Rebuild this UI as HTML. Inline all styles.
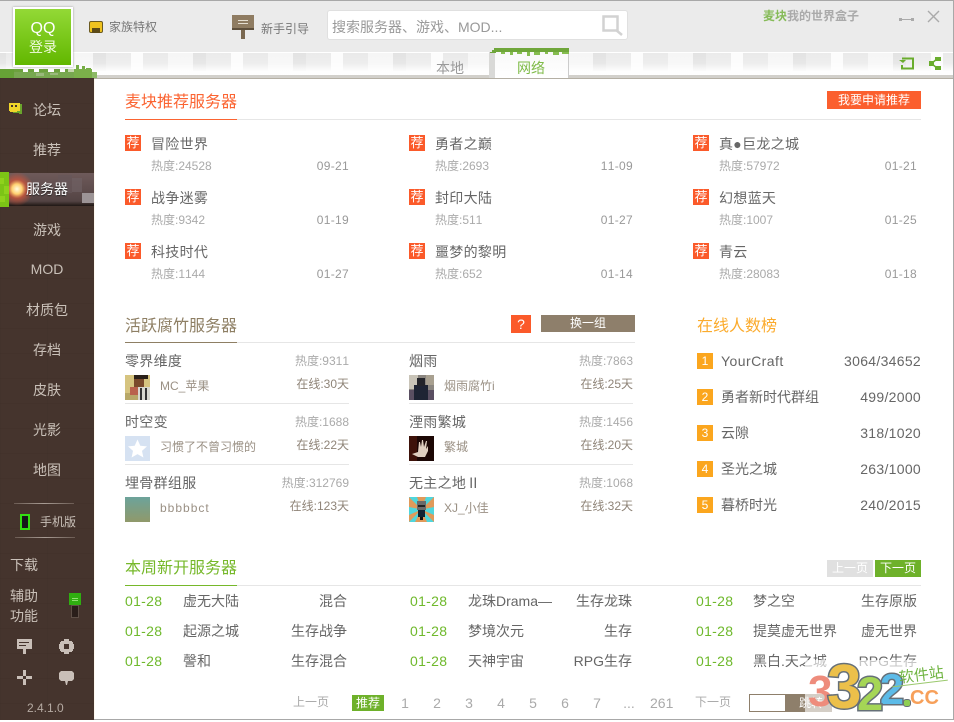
<!DOCTYPE html>
<html lang="zh"><head><meta charset="utf-8"><title>麦块我的世界盒子</title>
<style>
html,body{margin:0;padding:0}
body{width:954px;height:720px;position:relative;overflow:hidden;background:#fff;font-family:"Liberation Sans","Noto Sans CJK SC",sans-serif;font-size:12px;color:#666}
.a{position:absolute;display:block}
.t{position:absolute;line-height:20px;white-space:nowrap}
.n{font-size:14px;color:#666;letter-spacing:.3px}
.s{font-size:12px;color:#aaa;font-kerning:none}
.d{font-size:12px;color:#999;letter-spacing:.3px;font-kerning:none}
.o{font-size:12px;color:#8f8478;font-kerning:none}
.u{font-size:12px;color:#9a9084}
.h{font-size:16px}
.j{position:absolute;width:16px;height:16px;background:#fb5a2a;color:#fff;font-size:13px;line-height:16px;text-align:center}
.r{position:absolute;width:16px;height:16px;left:697px;background:#fba61e;color:#fff;font-size:12px;line-height:16px;text-align:center}
.m{font-size:14px;color:#c9c0b8;text-align:center;width:94px;left:0}
.g{font-size:14px;color:#6fb92c;letter-spacing:.3px;font-kerning:none}
.w{font-size:14px;color:#666}
.p{font-size:14px;color:#aaa;text-align:center;width:20px}
.b{-webkit-text-stroke:3px #667078;paint-order:stroke fill;font-weight:bold}
</style></head><body>

<!-- header -->
<div class="a" style="left:0;top:0;width:954px;height:52px;background:#ebebeb"></div>
<div class="a" style="left:0;top:0;width:954px;height:1px;background:#a8a8a8"></div>
<svg class="a" style="left:0;top:52px" width="954" height="26" viewBox="0 0 954 26">
<defs>
<pattern id="bk" x="0" y="1" width="100" height="22" patternUnits="userSpaceOnUse">
<rect width="100" height="22" fill="#f8f8f8"/>
<rect x="6" width="25" height="18" fill="#ebebeb"/>
<rect x="31" width="12" height="18" fill="#fcfcfc"/>
<rect x="43" width="25" height="18" fill="#eaeaea"/>
<rect x="68" width="25" height="18" fill="#f6f6f6"/>
<rect x="93" width="13" height="18" fill="#e3e3e3"/>
<rect x="0" width="6" height="18" fill="#e3e3e3"/>
</pattern>
<linearGradient id="f" x1="0" y1="0" x2="0" y2="1"><stop offset="0" stop-color="#fff" stop-opacity="0"/><stop offset=".45" stop-color="#fff" stop-opacity=".15"/><stop offset=".8" stop-color="#fff" stop-opacity=".85"/><stop offset="1" stop-color="#fff" stop-opacity=".95"/></linearGradient>
</defs>
<rect width="954" height="26" fill="#fbfbfb"/>
<rect y="1" width="954" height="22" fill="url(#bk)"/>
<rect y="1" width="954" height="22" fill="url(#f)"/>
<rect y="0" width="954" height="1" fill="#fff"/>
<rect y="23" width="954" height="3" fill="#d2d0cb"/>
</svg>
<div class="a" style="left:0;top:78px;width:954px;height:1px;background:#b4afa4"></div>

<!-- sidebar -->
<div class="a" style="left:0;top:78px;width:94px;height:642px;background-color:#45342d;background-image:linear-gradient(rgba(0,0,0,.035) 1px,transparent 1px),linear-gradient(90deg,rgba(0,0,0,.025) 1px,transparent 1px);background-size:47px 25px"></div>

<!-- grass -->
<svg class="a" style="left:0;top:64px" width="98" height="14" viewBox="0 0 98 14">
<rect x="0" y="5" width="14" height="9" fill="#66a236"/>
<rect x="14" y="8" width="60" height="6" fill="#78a850"/>
<g fill="#6da23e"><rect x="14" y="5" width="9" height="3"/><rect x="28" y="5" width="6" height="3"/><rect x="39" y="5" width="9" height="3"/><rect x="54" y="5" width="6" height="3"/><rect x="65" y="5" width="3" height="3"/></g>
<g fill="#9ab97c"><rect x="36" y="9" width="8" height="3"/><rect x="50" y="9" width="8" height="2"/></g>
<rect x="74" y="5" width="18" height="9" fill="#7bb04a"/>
<rect x="92" y="8" width="5" height="6" fill="#8cb965"/>
<g fill="#76ad45"><rect x="76" y="1" width="3" height="4"/><rect x="82" y="2" width="3" height="3"/><rect x="86" y="4" width="5" height="1"/></g>
<rect x="68" y="5" width="6" height="3" fill="#c7d8b0"/>
</svg>

<!-- QQ button -->
<div class="a" style="left:13px;top:7px;width:56px;height:56px;border:2px solid #fff;background:linear-gradient(#93d936,#62b700);box-shadow:0 0 2px #999"></div>
<div class="t" style="left:13px;width:60px;top:19px;text-align:center;font-size:16px;color:#fff">QQ</div>
<div class="t" style="left:13px;width:60px;top:37px;text-align:center;font-size:14px;color:#f1fbdf">登录</div>

<div class="a" style="left:89px;top:21px;width:14px;height:12px;background:#f0c31f;border:1px solid #6b5a20;box-sizing:border-box;border-radius:2px"></div>
<div class="a" style="left:92px;top:28px;width:8px;height:5px;background:#5c4a18"></div>
<div class="t" style="left:109px;top:17px;color:#777">家族特权</div>

<svg class="a" style="left:232px;top:15px" width="23" height="25" viewBox="0 0 23 25"><rect width="22" height="13" fill="#8f7c62"/><rect y="13" width="22" height="2" fill="#5e4f3c"/><rect x="9" y="15" width="4" height="9" fill="#7a6850"/><rect x="6" y="5" width="10" height="1" fill="#e6dfd2"/><rect x="6" y="8" width="10" height="1" fill="#e6dfd2"/></svg>
<div class="t" style="left:261px;top:19px;color:#777">新手引导</div>

<!-- search -->
<div class="a" style="left:327px;top:10px;width:301px;height:30px;background:#fff;border:1px solid #e0e0e0;box-sizing:border-box;border-radius:3px"></div>
<div class="t" style="left:332px;top:17px;font-size:14px;color:#999">搜索服务器、游戏、MOD...</div>
<svg class="a" style="left:601px;top:14px" width="24" height="24" viewBox="0 0 24 24"><rect x="2.500" y="2.500" width="14" height="14" fill="none" stroke="#d2d2d2" stroke-width="2.500"/><path d="M15 16l6 5" stroke="#d2d2d2" stroke-width="2.500" fill="none"/></svg>

<!-- title + window -->
<div class="t" style="left:763px;top:6px;color:#aaa;font-size:12px;font-weight:bold"><span style="color:#86bb58">麦块</span>我的世界盒子</div>
<svg class="a" style="left:895px;top:7px" width="50" height="20" viewBox="0 0 50 20"><rect x="4" y="12" width="15" height="1" fill="#aaa"/><rect x="4" y="11" width="3" height="3" fill="#aaa"/><rect x="16" y="11" width="3" height="3" fill="#aaa"/><path d="M33 4L44 15M44 4L33 15" stroke="#aaa" stroke-width="1.400"/></svg>

<!-- tabs -->
<div class="t" style="left:436px;top:58px;font-size:14px;color:#999">本地</div>
<div class="a" style="left:489px;top:52px;width:6px;height:26px;background:#d9d9d7"></div>
<div class="a" style="left:495px;top:50px;width:73px;height:28px;background:linear-gradient(#f8f8f8,#fff);box-shadow:1px 0 0 #ccc"></div>
<svg class="a" style="left:490px;top:48px" width="79" height="8" viewBox="0 0 79 8"><rect x="4" width="75" height="4" fill="#6fa63a"/><path d="M0 4h2v1H0zM2 2h4v3H2z" fill="#6fa63a"/><g fill="#86bd50"><rect x="11" y="4" width="4" height="2"/><rect x="20" y="4" width="3" height="3"/><rect x="27" y="4" width="5" height="2"/><rect x="37" y="4" width="3" height="4"/><rect x="44" y="4" width="6" height="3"/><rect x="55" y="4" width="3" height="2"/><rect x="63" y="4" width="6" height="3"/><rect x="72" y="4" width="7" height="2"/></g></svg>
<div class="t" style="left:517px;top:58px;font-size:14px;color:#7fbb48">网络</div>
<svg class="a" style="left:899px;top:56px" width="44" height="15" viewBox="0 0 44 15"><path d="M3 2.500H14V12.500H3V9" fill="none" stroke="#6aad2e" stroke-width="2"/><path d="M0 4h7l-3 3z" fill="#6aad2e"/><g fill="#6aad2e"><rect x="36" y="1" width="6" height="4"/><rect x="36" y="10" width="6" height="4"/><rect x="30" y="5" width="5" height="5"/></g><path d="M33 7L38 3M33 8L38 12" stroke="#6aad2e" stroke-width="1.500"/></svg>

<!-- sidebar items -->
<svg class="a" style="left:9px;top:102px" width="14" height="14" viewBox="0 0 14 14"><path d="M4 2h9v10h-3v-1H4z" fill="#6aa52c"/><rect y="1" width="11" height="8" fill="#f0d52a"/><rect x="2" y="3" width="2" height="2" fill="#45342d"/><rect x="6" y="3" width="2" height="2" fill="#45342d"/><rect x="1" y="9" width="7" height="1" fill="#f0d52a"/></svg>
<div class="t m" style="top:100px">论坛</div>
<div class="t m" style="top:140px">推荐</div>

<svg class="a" style="left:0;top:172px" width="94" height="35" viewBox="0 0 94 35"><defs><radialGradient id="gl" cx=".5" cy=".5" r=".5"><stop offset="0" stop-color="#fffbe0"/><stop offset=".3" stop-color="#ffd070"/><stop offset=".55" stop-color="#d8563a" stop-opacity=".7"/><stop offset="1" stop-color="#d8563a" stop-opacity="0"/></radialGradient><linearGradient id="bd" x1="0" y1="0" x2="0" y2="1"><stop offset="0" stop-color="#6e5a5a"/><stop offset=".85" stop-color="#544444"/><stop offset="1" stop-color="#1f1714"/></linearGradient></defs><rect x="8" y="1" width="86" height="33" fill="url(#bd)"/><rect x="58" y="3" width="14" height="18" fill="#66575a" opacity=".7"/><rect x="72" y="6" width="10" height="14" fill="#6f6164" opacity=".7"/><rect x="82" y="21" width="12" height="10" fill="#9c9496"/><circle cx="17" cy="17" r="17" fill="url(#gl)"/><rect x="0" y="0" width="9" height="35" fill="#7cc416"/><rect x="0" y="6" width="4" height="6" fill="#8fd21c"/><rect x="4" y="14" width="5" height="8" fill="#8fd21c"/><rect x="0" y="24" width="5" height="6" fill="#8fd21c"/></svg>
<div class="t" style="left:26px;top:179px;font-size:14px;color:#fff;text-shadow:0 1px 1px #222">服务器</div>

<div class="t m" style="top:220px">游戏</div>
<div class="t m" style="top:259px">MOD</div>
<div class="t m" style="top:300px">材质包</div>
<div class="t m" style="top:340px">存档</div>
<div class="t m" style="top:380px">皮肤</div>
<div class="t m" style="top:420px">光影</div>
<div class="t m" style="top:460px">地图</div>

<div class="a" style="left:14px;top:503px;width:60px;height:1px;background:linear-gradient(90deg,#6b5b53,#a89c94,#6b5b53)"></div>
<svg class="a" style="left:20px;top:514px" width="10" height="16" viewBox="0 0 10 16"><rect x="1" y="1" width="8" height="14" fill="#16181a" stroke="#33dd11" stroke-width="2"/></svg>
<div class="t" style="left:40px;top:512px;color:#c9c0b8">手机版</div>
<div class="a" style="left:15px;top:537px;width:60px;height:1px;background:linear-gradient(90deg,#6b5b53,#a89c94,#6b5b53)"></div>

<div class="t" style="left:10px;top:555px;font-size:14px;color:#c9c0b8">下载</div>
<div class="t" style="left:10px;top:586px;font-size:14px;color:#c9c0b8">辅助</div>
<div class="t" style="left:10px;top:606px;font-size:14px;color:#c9c0b8">功能</div>
<div class="a" style="left:71px;top:605px;width:8px;height:13px;background:#2a1e1a;border:1px solid #5e4f47;box-sizing:border-box"></div>
<div class="a" style="left:69px;top:593px;width:12px;height:12px;background:#2fae10"></div>
<div class="a" style="left:72px;top:598px;width:6px;height:1px;background:#8fe070;box-shadow:0 2px 0 #8fe070"></div>

<svg class="a" style="left:16px;top:637px" width="62" height="50" viewBox="0 0 62 50" fill="#c9bfb8"><rect x="1" y="2" width="15" height="10"/><rect x="7" y="12" width="3" height="5"/><rect x="3" y="5" width="10" height="1" fill="#45342d"/><rect x="3" y="8" width="7" height="1" fill="#45342d"/>
<path fill-rule="evenodd" d="M48 2h5v2h2v-0h1v1h1v2h1v5h-1v2h-1v1h-1v0h-2v2h-5v-2h-2v0h-1v-1h-1v-2h-1V7h1V5h1V4h1v0h2zM48 7v5h5V7z"/>
<rect x="7" y="33" width="3" height="6"/><rect x="7" y="42" width="3" height="6"/><rect x="1" y="39" width="6" height="3"/><rect x="10" y="39" width="6" height="3"/>
<path d="M45 34h11l2 2v6l-2 2h-4l-1 4h-1l-1-4h-4l-2-2v-6z"/></svg>
<div class="t" style="left:27px;top:698px;font-size:12px;color:#b5aaa2">2.4.1.0</div>

<!-- main divider -->
<div class="a" style="left:94px;top:79px;width:1px;height:640px;background:#fdf8ef"></div>
<div class="a" style="left:953px;top:0;width:1px;height:720px;background:#a8a8a8"></div>
<div class="a" style="left:94px;top:719px;width:860px;height:1px;background:#a8a8a8"></div>

<!-- recommended -->
<div class="t h" style="left:125px;top:93px;color:#fb6432">麦块推荐服务器</div>
<div class="a" style="left:125px;top:119px;width:796px;height:1px;background:#e6e6e6"></div>
<div class="a" style="left:125px;top:119px;width:112px;height:1px;background:#fb6432"></div>
<div class="t" style="left:827px;top:91px;width:94px;height:18px;line-height:18px;background:#fb5f2e;color:#fff;text-align:center">我要申请推荐</div>

<div class="j" style="left:125px;top:135px">荐</div><div class="t n" style="left:151px;top:134px">冒险世界</div><div class="t s" style="left:151px;top:156px">热度:24528</div><div class="t d" style="right:605px;top:156px">09-21</div>
<div class="j" style="left:409px;top:135px">荐</div><div class="t n" style="left:435px;top:134px">勇者之巅</div><div class="t s" style="left:435px;top:156px">热度:2693</div><div class="t d" style="right:321px;top:156px">11-09</div>
<div class="j" style="left:693px;top:135px">荐</div><div class="t n" style="left:719px;top:134px">真●巨龙之城</div><div class="t s" style="left:719px;top:156px">热度:57972</div><div class="t d" style="right:37px;top:156px">01-21</div>
<div class="j" style="left:125px;top:189px">荐</div><div class="t n" style="left:151px;top:188px">战争迷雾</div><div class="t s" style="left:151px;top:210px">热度:9342</div><div class="t d" style="right:605px;top:210px">01-19</div>
<div class="j" style="left:409px;top:189px">荐</div><div class="t n" style="left:435px;top:188px">封印大陆</div><div class="t s" style="left:435px;top:210px">热度:511</div><div class="t d" style="right:321px;top:210px">01-27</div>
<div class="j" style="left:693px;top:189px">荐</div><div class="t n" style="left:719px;top:188px">幻想蓝天</div><div class="t s" style="left:719px;top:210px">热度:1007</div><div class="t d" style="right:37px;top:210px">01-25</div>
<div class="j" style="left:125px;top:243px">荐</div><div class="t n" style="left:151px;top:242px">科技时代</div><div class="t s" style="left:151px;top:264px">热度:1144</div><div class="t d" style="right:605px;top:264px">01-27</div>
<div class="j" style="left:409px;top:243px">荐</div><div class="t n" style="left:435px;top:242px">噩梦的黎明</div><div class="t s" style="left:435px;top:264px">热度:652</div><div class="t d" style="right:321px;top:264px">01-14</div>
<div class="j" style="left:693px;top:243px">荐</div><div class="t n" style="left:719px;top:242px">青云</div><div class="t s" style="left:719px;top:264px">热度:28083</div><div class="t d" style="right:37px;top:264px">01-18</div>

<!-- active -->
<div class="t h" style="left:125px;top:317px;color:#8e7f64">活跃腐竹服务器</div>
<div class="a" style="left:125px;top:342px;width:510px;height:1px;background:#e6e6e6"></div>
<div class="a" style="left:125px;top:342px;width:112px;height:1px;background:#8e7f64"></div>
<div class="a" style="left:511px;top:315px;width:20px;height:18px;background:#fb5a2a;color:#fff;font-size:14px;line-height:18px;text-align:center">?</div>
<div class="a" style="left:541px;top:315px;width:94px;height:17px;background:#8e7f6b;color:#fff;font-size:12px;line-height:17px;text-align:center">换一组</div>

<div class="t n" style="left:125px;top:351px">零界维度</div><div class="t s" style="right:605px;top:351px">热度:9311</div><div class="t u" style="left:160px;top:376px">MC_苹果</div><div class="t o" style="right:605px;top:374px">在线:30天</div>
<div class="a" style="left:125px;top:403px;width:224px;height:1px;background:#e6e6e6"></div>
<div class="t n" style="left:125px;top:412px">时空变</div><div class="t s" style="right:605px;top:412px">热度:1688</div><div class="t u" style="left:160px;top:437px">习惯了不曾习惯的</div><div class="t o" style="right:605px;top:435px">在线:22天</div>
<div class="a" style="left:125px;top:464px;width:224px;height:1px;background:#e6e6e6"></div>
<div class="t n" style="left:125px;top:473px">埋骨群组服</div><div class="t s" style="right:605px;top:473px">热度:312769</div><div class="t u" style="left:160px;top:498px;letter-spacing:1px">bbbbbct</div><div class="t o" style="right:605px;top:496px">在线:123天</div>

<div class="t n" style="left:409px;top:351px">烟雨</div><div class="t s" style="right:321px;top:351px">热度:7863</div><div class="t u" style="left:444px;top:376px">烟雨腐竹i</div><div class="t o" style="right:321px;top:374px">在线:25天</div>
<div class="a" style="left:409px;top:403px;width:224px;height:1px;background:#e6e6e6"></div>
<div class="t n" style="left:409px;top:412px">湮雨繁城</div><div class="t s" style="right:321px;top:412px">热度:1456</div><div class="t u" style="left:444px;top:437px">繁城</div><div class="t o" style="right:321px;top:435px">在线:20天</div>
<div class="a" style="left:409px;top:464px;width:224px;height:1px;background:#e6e6e6"></div>
<div class="t n" style="left:409px;top:473px">无主之地Ⅱ</div><div class="t s" style="right:321px;top:473px">热度:1068</div><div class="t u" style="left:444px;top:498px">XJ_小佳</div><div class="t o" style="right:321px;top:496px">在线:32天</div>

<!-- avatars -->
<svg class="a" style="left:125px;top:375px" width="25" height="25" viewBox="0 0 25 25"><rect width="25" height="25" fill="#d6c480"/><rect y="18" width="25" height="7" fill="#b8a868"/><rect x="9" y="0" width="14" height="4" fill="#2a2019"/><rect x="9" y="4" width="10" height="8" fill="#7a4a2c"/><rect x="13" y="12" width="12" height="13" fill="#d8d8d0"/><rect x="15" y="13" width="2" height="12" fill="#333"/><rect x="20" y="13" width="2" height="12" fill="#333"/><rect x="5" y="12" width="8" height="8" fill="#b9624c"/></svg>
<svg class="a" style="left:125px;top:436px" width="25" height="25" viewBox="0 0 25 25"><rect width="25" height="25" fill="#d6e2f2"/><path d="M12.500 3.500l2.800 6.200 6.700.7-5 4.500 1.400 6.600-5.900-3.400-5.900 3.400 1.400-6.600-5-4.500 6.700-.7z" fill="#fff"/></svg>
<svg class="a" style="left:125px;top:497px" width="25" height="25" viewBox="0 0 25 25"><defs><linearGradient id="b3" x1="0" y1="0" x2="0" y2="1"><stop offset="0" stop-color="#6ca39b"/><stop offset="1" stop-color="#90996a"/></linearGradient></defs><rect width="25" height="25" fill="url(#b3)"/></svg>
<svg class="a" style="left:409px;top:375px" width="25" height="25" viewBox="0 0 25 25"><rect width="25" height="25" fill="#8b8680"/><rect x="0" y="0" width="9" height="14" fill="#c9c4b8"/><rect x="17" y="0" width="8" height="10" fill="#a8a090"/><rect y="15" width="25" height="10" fill="#5a4f62"/><rect x="5" y="10" width="14" height="15" fill="#1e2434"/><rect x="8" y="3" width="8" height="8" fill="#23242a"/></svg>
<svg class="a" style="left:409px;top:436px" width="25" height="25" viewBox="0 0 25 25"><rect width="25" height="25" fill="#1c0705"/><rect x="0" y="0" width="8" height="25" fill="#3e120a"/><path d="M9 21l-6-3 6-2 1-10h1l1 5 1-7h1l1 7 2-6h1l-1 8 2-3v5l-3 6z" fill="#e0cfc0"/></svg>
<svg class="a" style="left:409px;top:497px" width="25" height="25" viewBox="0 0 25 25"><rect width="25" height="25" fill="#e09a5a"/><path d="M12.500 12.500L0 0h8zM12.500 12.500L17 0h8zM12.500 12.500L25 10v8zM12.500 12.500L18 25h7zM12.500 12.500L0 25h6zM12.500 12.500L0 10v8z" fill="#4fd6dc"/><rect x="8" y="4" width="9" height="9" fill="#6a6a6a"/><rect x="9" y="8" width="7" height="2" fill="#222"/><rect x="9" y="13" width="7" height="7" fill="#123"/><rect x="11" y="20" width="3" height="3" fill="#111"/></svg>

<!-- online ranks -->
<div class="t h" style="left:697px;top:317px;color:#fbab2d">在线人数榜</div>
<div class="r" style="top:353px">1</div><div class="t n" style="left:721px;top:351px;letter-spacing:.45px">YourCraft</div><div class="t n" style="right:33px;top:351px">3064/34652</div>
<div class="r" style="top:389px">2</div><div class="t w" style="left:721px;top:387px">勇者新时代群组</div><div class="t n" style="right:33px;top:387px">499/2000</div>
<div class="r" style="top:425px">3</div><div class="t w" style="left:721px;top:423px">云隙</div><div class="t n" style="right:33px;top:423px">318/1020</div>
<div class="r" style="top:461px">4</div><div class="t w" style="left:721px;top:459px">圣光之城</div><div class="t n" style="right:33px;top:459px">263/1000</div>
<div class="r" style="top:497px">5</div><div class="t w" style="left:721px;top:495px">暮桥时光</div><div class="t n" style="right:33px;top:495px">240/2015</div>

<!-- new servers -->
<div class="t h" style="left:125px;top:559px;color:#76b82a">本周新开服务器</div>
<div class="a" style="left:125px;top:585px;width:796px;height:1px;background:#e6e6e6"></div>
<div class="a" style="left:125px;top:585px;width:112px;height:1px;background:#76b82a"></div>
<div class="a" style="left:827px;top:560px;width:46px;height:17px;background:#e0e0e0;color:#fff;line-height:17px;text-align:center">上一页</div>
<div class="a" style="left:875px;top:560px;width:46px;height:17px;background:#6eb12a;color:#fff;line-height:17px;text-align:center">下一页</div>

<div class="t g" style="left:125px;top:591px">01-28</div><div class="t w" style="left:183px;top:591px">虚无大陆</div><div class="t w" style="right:607px;top:591px">混合</div>
<div class="t g" style="left:125px;top:621px">01-28</div><div class="t w" style="left:183px;top:621px">起源之城</div><div class="t w" style="right:607px;top:621px">生存战争</div>
<div class="t g" style="left:125px;top:651px">01-28</div><div class="t w" style="left:183px;top:651px">謦和</div><div class="t w" style="right:607px;top:651px">生存混合</div>
<div class="t g" style="left:410px;top:591px">01-28</div><div class="t w" style="left:468px;top:591px">龙珠Drama—</div><div class="t w" style="right:322px;top:591px">生存龙珠</div>
<div class="t g" style="left:410px;top:621px">01-28</div><div class="t w" style="left:468px;top:621px">梦境次元</div><div class="t w" style="right:322px;top:621px">生存</div>
<div class="t g" style="left:410px;top:651px">01-28</div><div class="t w" style="left:468px;top:651px">天神宇宙</div><div class="t w" style="right:322px;top:651px">RPG生存</div>
<div class="t g" style="left:696px;top:591px">01-28</div><div class="t w" style="left:753px;top:591px">梦之空</div><div class="t w" style="right:37px;top:591px">生存原版</div>
<div class="t g" style="left:696px;top:621px">01-28</div><div class="t w" style="left:753px;top:621px">提莫虚无世界</div><div class="t w" style="right:37px;top:621px">虚无世界</div>
<div class="t g" style="left:696px;top:651px">01-28</div><div class="t w" style="left:753px;top:651px">黑白.天之城</div><div class="t w" style="right:37px;top:651px">RPG生存</div>

<!-- pagination -->
<div class="t" style="left:293px;top:692px;color:#aaa">上一页</div>
<div class="a" style="left:352px;top:695px;width:32px;height:16px;background:#6eb12a;color:#fff;line-height:16px;text-align:center">推荐</div>
<div class="t p" style="left:395px;top:693px">1</div><div class="t p" style="left:427px;top:693px">2</div><div class="t p" style="left:459px;top:693px">3</div><div class="t p" style="left:491px;top:693px">4</div><div class="t p" style="left:523px;top:693px">5</div><div class="t p" style="left:555px;top:693px">6</div><div class="t p" style="left:587px;top:693px">7</div><div class="t p" style="left:619px;top:693px">...</div>
<div class="t" style="left:650px;top:693px;font-size:14px;color:#aaa">261</div>
<div class="t" style="left:695px;top:692px;color:#aaa">下一页</div>
<div class="a" style="left:749px;top:694px;width:37px;height:18px;border:1px solid #8e7f6b;box-sizing:border-box;background:#fff"></div>
<div class="a" style="left:786px;top:694px;width:46px;height:18px;background:#8e7f6b;color:#fff;line-height:18px;padding-left:13px;box-sizing:border-box">跳转</div>

<!-- watermark -->
<div class="a" style="left:805px;top:660px;width:146px;height:52px;background:rgba(255,255,255,.62)"></div>
<div class="t b" style="left:880px;top:671px;font-size:43px;color:#5cbbe8;line-height:38px">2</div>
<div class="t b" style="left:857px;top:675px;font-size:47px;color:#a5d656;line-height:38px">2</div>
<div class="t" style="left:808px;top:677px;font-size:44px;font-weight:bold;color:#ee8c7c;line-height:30px">3</div>
<div class="t b" style="left:827px;top:663px;font-size:62px;color:#ecc04a;line-height:50px">3</div>
<div class="a" style="left:903px;top:699px;width:6px;height:6px;border-radius:3px;background:#8fcf52;border:1px solid #667078"></div>
<div class="t" style="left:910px;top:688px;font-size:20px;font-weight:bold;color:#f7a05a">CC</div>
<div class="t" style="left:899px;top:666px;font-size:15px;color:#6fb440;transform:rotate(-7deg)">软件站</div>
<div class="a" style="left:892px;top:683px;width:56px;height:1px;background:#9bc96e;transform:rotate(-7deg)"></div>

</body></html>
